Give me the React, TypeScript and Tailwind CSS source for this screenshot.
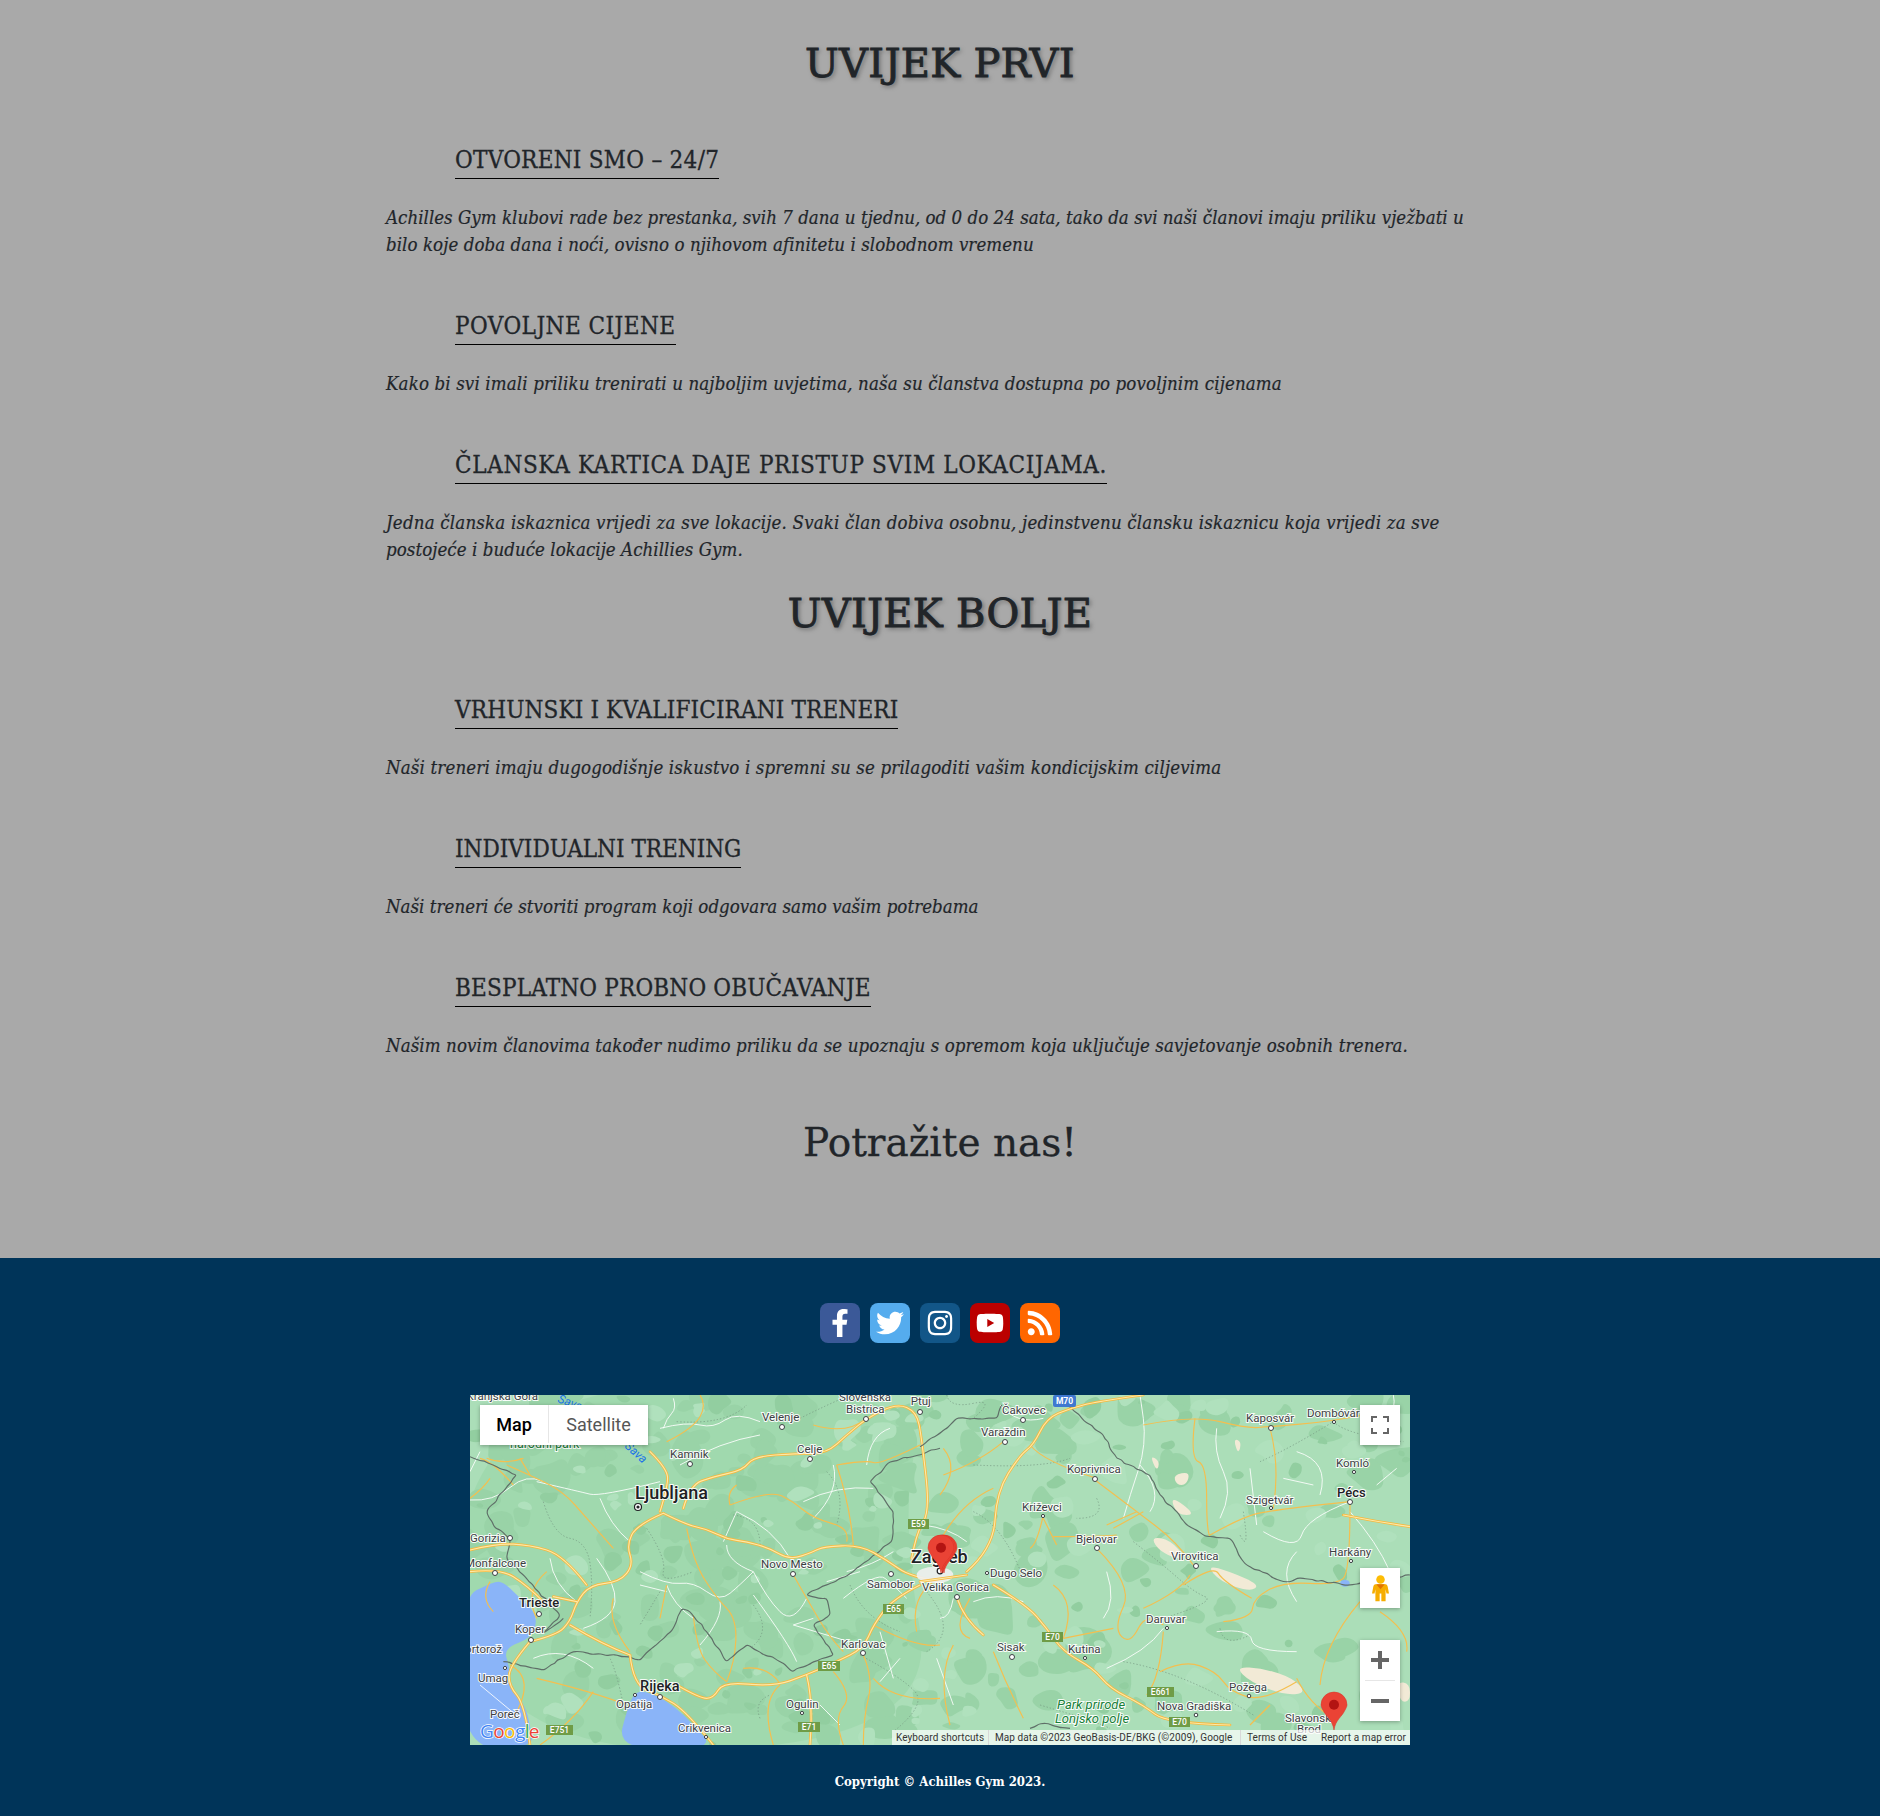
import React from "react";
import { FaFacebookF, FaTwitter, FaInstagram, FaYoutube, FaRss } from "react-icons/fa";

const smooth = (pts: number[][], close = false) => {
  if (pts.length < 3) return "M" + pts.map((p) => p.join(" ")).join("L");
  let d = "";
  if (close) {
    const s = [(pts[0][0] + pts[pts.length - 1][0]) / 2, (pts[0][1] + pts[pts.length - 1][1]) / 2];
    d = `M${s[0]} ${s[1]}`;
    pts.forEach((p, i) => {
      const n = pts[(i + 1) % pts.length];
      d += `Q${p[0]} ${p[1]} ${(p[0] + n[0]) / 2} ${(p[1] + n[1]) / 2}`;
    });
    return d + "Z";
  }
  d = `M${pts[0][0]} ${pts[0][1]}`;
  for (let i = 1; i < pts.length - 1; i++) {
    const p = pts[i];
    const n = pts[i + 1];
    const last = i === pts.length - 2;
    d += `Q${p[0]} ${p[1]} ${last ? n[0] : (p[0] + n[0]) / 2} ${last ? n[1] : (p[1] + n[1]) / 2}`;
  }
  return d;
};

const rng = (seed: number) => () => {
  seed = (seed + 0x6d2b79f5) | 0;
  let t = Math.imul(seed ^ (seed >>> 15), 1 | seed);
  t = (t + Math.imul(t ^ (t >>> 7), 61 | t)) ^ t;
  return ((t ^ (t >>> 14)) >>> 0) / 4294967296;
};
const patches = (seed: number, n: number, x0: number, x1: number, rMin: number, rMax: number) => {
  const r = rng(seed);
  const out: number[][][] = [];
  for (let i = 0; i < n; i++) {
    const cx = x0 + r() * (x1 - x0);
    const cy = r() * 350;
    const base = rMin + r() * (rMax - rMin);
    const pts: number[][] = [];
    const k = 6 + Math.floor(r() * 3);
    const sq = 0.55 + r() * 0.6;
    for (let j = 0; j < k; j++) {
      const a = (j / k) * Math.PI * 2;
      const rad = base * (0.55 + r() * 0.75);
      pts.push([+(cx + Math.cos(a) * rad).toFixed(1), +(cy + Math.sin(a) * rad * sq).toFixed(1)]);
    }
    out.push(pts);
  }
  return out;
};
// A national border wiggles: subdivide each leg and displace it.
const jag = (lines: number[][][], seed: number) => {
  const r = rng(seed);
  return lines.map((pts) => {
    const out: number[][] = [pts[0]];
    for (let i = 1; i < pts.length; i++) {
      const [ax, ay] = pts[i - 1];
      const [bx, by] = pts[i];
      const steps = Math.max(1, Math.round(Math.hypot(bx - ax, by - ay) / 14));
      for (let s = 1; s <= steps; s++) {
        const t = s / steps;
        const j = s === steps ? 0 : 7;
        out.push([+(ax + (bx - ax) * t + (r() - 0.5) * j).toFixed(1), +(ay + (by - ay) * t + (r() - 0.5) * j).toFixed(1)]);
      }
    }
    return out;
  });
};
const darkPatches = [...patches(11, 150, 0, 470, 7, 22), ...patches(23, 80, 470, 940, 7, 24)];
const deepPatches = [...patches(37, 60, 0, 470, 4, 12), ...patches(41, 30, 470, 940, 4, 11)];
const lightPatches = [...patches(53, 50, 0, 480, 5, 14), ...patches(59, 40, 470, 940, 6, 16)];

const tanE: number[][][] = [
  [[665,455],[720,465],[770,520],[730,520],[680,490]],
  [[830,540],[900,560],[990,600],[960,620],[870,590]],
  [[915,845],[1000,850],[1090,880],[1130,925],[1060,930],[960,890]],
  [[730,270],[780,260],[770,300],[740,300]],
  [[660,210],[690,230],[680,260]],
  [[910,160],[935,170],[925,210]],
  [[720,330],[800,390],[740,390]],
  [[1400,890],[1440,895],[1440,950],[1410,950]],
];
const motorW: number[][][] = [
  [[610,385],[680,420],[740,432],[800,462],[860,470],[930,490],[990,525],[1060,500],[1090,485],[1200,480],[1280,525],[1350,575],[1440,590]],
  [[610,385],[530,420],[500,480],[520,540],[480,590],[390,600],[350,650],[330,710],[290,750],[210,770]],
  [[280,635],[350,650]],
  [[670,370],[690,300],[760,275],[850,255],[880,215],[1010,205],[1100,205],[1160,150],[1220,100],[1310,55],[1370,80],[1385,160],[1410,380],[1370,440],[1355,520]],
  [[600,380],[625,300],[620,250],[570,200]],
  [[510,810],[520,900],[600,930],[680,980],[760,1080]],
  [[650,900],[720,940],[760,940],[790,890],[940,905],[1040,870],[1130,830],[1210,790],[1240,720],[1300,640],[1380,600]],
  [[1040,870],[1060,950],[1050,1080]],
  [[330,720],[430,780],[510,810]],
  [[210,770],[150,840],[145,900],[195,960],[210,1080]],
  [[30,495],[110,475],[210,480],[310,510],[380,600]],
  [[30,560],[120,550],[200,600],[250,650]],
];
const orangeW: number[][][] = [
  [[140,240],[210,270],[310,320],[380,400],[460,490]],
  [[210,270],[180,220]],
  [[680,430],[700,530],[770,640],[830,700],[825,830],[800,890]],
  [[1000,570],[1040,640],[1110,760],[1150,800]],
  [[620,600],[600,700]],
  [[810,360],[930,315],[1000,350],[1060,400],[1170,430],[1160,470]],
  [[1130,240],[1170,360],[1180,480]],
  [[1130,240],[1220,225],[1260,240],[1380,180]],
  [[1210,810],[1240,880],[1210,1000],[1210,1080]],
  [[1240,720],[1370,790],[1440,780]],
  [[850,850],[920,840],[960,895]],
  [[700,690],[710,790],[760,860],[800,890]],
  [[150,840],[230,880],[160,1000]],
  [[230,880],[400,920],[500,960]],
  [[400,920],[340,1010],[240,1080]],
  [[810,360],[800,320],[830,300]],
  [[460,640],[440,710],[510,800]],
  [[940,1080],[900,950],[960,900]],
  [[1240,880],[1300,950],[1440,940]],
  [[620,170],[700,130],[740,60],[720,30]],
  [[60,220],[100,230],[160,300]],
  [[1060,120],[1160,150],[1220,100]],
  [[1420,590],[1350,640],[1370,740]],
  [[80,220],[130,240],[190,220]],
  [[30,340],[70,310],[90,280]],
  [[100,680],[60,640],[90,590]],
  [[230,700],[190,620],[260,560]],
  [[1120,860],[1180,930],[1120,1000],[1150,1080]],
];
const whiteW: number[][][] = [
  [[420,340],[450,420],[510,470]],
  [[540,560],[620,600],[700,590],[780,650],[840,600],[880,560]],
  [[620,600],[640,660],[700,700]],
  [[880,560],[920,640],[1000,720],[1040,640]],
  [[800,480],[800,530],[880,560]],
  [[830,380],[790,470]],
  [[830,380],[940,430],[990,520]],
  [[1030,350],[1130,300],[1240,310]],
  [[30,345],[100,350],[200,265],[250,290]],
  [[230,290],[360,320],[420,335],[600,290]],
  [[600,130],[680,110],[760,130],[830,80],[900,110]],
  [[640,40],[650,70],[620,100],[610,130]],
  [[1160,560],[1240,540],[1300,500]],
  [[880,630],[990,780],[1010,830]],
  [[1000,720],[1200,780]],
  [[1060,700],[1000,720]],
  [[1260,740],[1300,880]],
  [[660,240],[780,170],[900,150]],
  [[270,520],[280,600],[350,650]],
  [[540,600],[620,620]],
  [[1100,590],[1200,560]],
  [[180,1000],[60,900]],
  [[780,650],[790,700],[720,780]],
  [[1150,640],[1250,560],[1300,600],[1340,640]],
  [[1220,240],[1230,150],[1290,130]],
  [[1120,240],[1140,320],[1060,400]],
  [[60,200],[30,260]],
  [[220,820],[310,780],[400,850]],
  [[1080,960],[1140,1020]],
  [[1320,820],[1260,890]],
  [[410,520],[470,600],[460,700],[370,730]],
];
const dotW: number[][][] = [
  [[250,350],[280,450],[380,470],[400,600],[390,700]],
  [[560,430],[620,520],[600,600],[700,560]],
  [[820,390],[900,400],[900,480]],
  [[650,110],[800,120],[860,60]],
  [[1020,100],[1100,60],[1170,30]],
  [[1200,810],[1330,880],[1400,960],[1300,1040]],
  [[880,660],[940,740],[870,790]],
  [[1100,260],[1160,320],[1130,420]],
  [[490,960],[470,860],[450,820]],
  [[900,1000],[880,950],[930,930]],
  [[1170,600],[1210,700],[1320,740]],
  [[600,620],[540,720]],
];
const borderW = jag([
  [[130,830],[250,855],[340,800],[500,815],[540,825],[640,730],[665,672],[690,680],[740,740],[800,830],[860,780],[950,825],[1000,860],[1060,830],[1120,810],[1060,720],[1110,690],[1100,640],[1040,630],[1100,600],[1180,560],[1295,470],[1300,380],[1230,290],[1290,230],[1440,190]],
  [[150,460],[100,420],[80,380],[170,270],[100,240],[30,215]],
  [[150,460],[140,520],[200,580],[300,690],[250,745],[310,700]],
], 71);
const motorE: number[][][] = [
  [[110,560],[190,490],[200,320],[270,210],[310,180],[350,100],[420,70],[500,50],[640,30]],
  [[190,600],[290,660],[350,730],[400,800],[490,850],[540,910],[640,960],[710,1015],[900,1020]],
  [[80,635],[100,700],[160,750]],
  [[1240,390],[1340,410],[1440,425]],
  [[-30,590],[110,570]],
];
const orangeE: number[][][] = [
  [[340,390],[320,480],[300,490]],
  [[340,400],[380,480]],
  [[370,455],[500,455],[560,450]],
  [[500,490],[610,600],[550,730],[600,780],[650,680],[700,720]],
  [[550,730],[400,760]],
  [[495,285],[620,380],[740,470],[790,540]],
  [[530,420],[620,380]],
  [[780,570],[750,620],[640,670]],
  [[795,100],[780,220],[830,240],[830,440],[840,455]],
  [[640,120],[790,90],[950,130],[1020,125],[1200,110],[1300,90]],
  [[1020,130],[1050,240],[1030,370]],
  [[840,450],[930,400],[1020,375],[1260,350]],
  [[1260,360],[1260,560],[1220,600],[1060,590],[970,640],[965,700],[880,710]],
  [[700,740],[690,880],[650,930]],
  [[690,860],[760,825],[860,860],[900,920],[1000,950],[1100,890]],
  [[1100,880],[1140,960],[1210,1000]],
  [[1020,960],[960,1020]],
  [[220,170],[150,230],[40,270]],
  [[190,310],[100,350],[40,450]],
  [[70,780],[20,870],[60,1020]],
  [[190,800],[230,900],[280,1000]],
  [[1290,650],[1180,780],[1170,900]],
  [[1350,680],[1440,740],[1430,800]],
  [[965,640],[880,590],[850,540],[760,600]],
  [[550,430],[640,380]],
  [[40,190],[90,250],[30,330]],
  [[300,180],[340,230],[500,280]],
  [[120,640],[60,740],[120,760]],
  [[370,600],[440,650],[400,760]],
];
const whiteE: number[][][] = [
  [[70,640],[60,700],[30,700]],
  [[640,100],[650,180],[600,330],[580,400]],
  [[630,30],[640,100]],
  [[530,560],[560,650],[520,700]],
  [[110,470],[60,430],[-20,420]],
  [[860,130],[850,200],[910,320],[870,400]],
  [[980,420],[960,250]],
  [[1000,440],[1100,500],[1130,400],[1260,350]],
  [[1260,380],[1340,470],[1380,560]],
  [[1340,300],[1400,250]],
  [[860,740],[960,730],[970,800],[1100,800]],
  [[530,850],[650,800],[700,730]],
  [[1100,200],[1200,230],[1170,330]],
  [[210,60],[260,120],[340,100]],
  [[1100,650],[1040,560],[1100,500]],
  [[1370,150],[1400,60],[1390,30]],
  [[20,820],[70,960]],
  [[630,240],[700,320],[660,380]],
  [[130,650],[200,620],[280,650]],
  [[1150,300],[1060,280]],
];
const dotE: number[][][] = [
  [[50,30],[60,70],[200,40],[130,100]],
  [[-10,620],[90,740],[-10,800]],
  [[130,240],[340,250],[420,220]],
  [[130,380],[220,420],[280,580]],
  [[500,340],[530,400],[440,400]],
  [[610,470],[700,540],[790,620],[860,650],[700,700]],
  [[990,230],[1080,190],[1210,110]],
  [[1210,110],[1250,150],[1420,170]],
  [[940,380],[960,510],[930,450]],
  [[870,730],[880,790],[960,750]],
  [[580,830],[760,860],[970,990]],
  [[330,960],[500,1010],[540,1030]],
];
const borderE = jag([
  [[410,60],[520,150],[560,220],[660,270],[690,330],[735,375],[770,420],[830,455],[900,460],[950,540],[1060,590],[1120,580],[1260,600],[1440,570]],
  [[-30,185],[50,130],[80,100],[130,100],[200,100],[215,60]],
  [[300,1030],[340,1015],[420,1030]],
], 83);

const halo = "[paint-order:stroke] stroke-white/90 stroke-[2px]";
const labels: [string, number, number][] = [
  ["Kamnik", 200, 63.3],
  ["Velenje", 292, 26],
  ["Celje", 327, 57.7],
  ["Slovenska", 369, 5.7],
  ["Bistrica", 376, 18],
  ["Ptuj", 440.7, 10],
  ["Gorizia", 0, 146.7],
  ["Umag", 8, 287],
  ["Poreč", 20, 323],
  ["Koper", 45, 238],
  ["Opatija", 146, 313],
  ["Crikvenica", 208, 337],
  ["Ogulin", 316, 313],
  ["Karlovac", 371, 253],
  ["Novo Mesto", 291, 173],
  ["Samobor", 397, 193],
  ["Velika Gorica", 452, 196],
  ["Čakovec", 532, 19],
  ["Varaždin", 511, 41],
  ["Koprivnica", 597, 78],
  ["Križevci", 552, 116],
  ["Bjelovar", 606, 148],
  ["Dugo Selo", 520, 182],
  ["Sisak", 527, 256],
  ["Kutina", 598, 258],
  ["Daruvar", 676, 228],
  ["Virovitica", 701, 165],
  ["Kaposvár", 776, 27],
  ["Dombóvár", 837, 22],
  ["Komló", 866, 72],
  ["Szigetvár", 776, 109],
  ["Harkány", 859, 161],
  ["Požega", 759, 296],
  ["Nova Gradiška", 687, 315],
  ["Slavonski", 815, 327],
  ["Brod", 827, 338],
];
const bigLabels: [string, number, number, number][] = [
  ["Ljubljana", 165, 104, 18],
  ["Zagreb", 441, 168, 18],
  ["Rijeka", 170, 296, 14.5],
  ["Trieste", 49, 212, 13],
  ["Pécs", 867, 102, 13],
];
const cityDots: [number, number, number][] = [
  [190, 302, 2.5], [69, 219, 2.5], [61, 245, 2.5], [323, 179, 2.5], [421, 179, 2.5], [393, 258, 2.5],
  [40, 143, 2.5], [25, 178, 2.5], [312, 32, 2.5], [340, 64, 2.5], [396, 24, 2.5], [450, 17, 2.5], [220, 69, 2.5],
  [553, 25, 2.5], [535, 47, 2.5], [625, 84, 2.5], [627, 153, 2.5], [487, 202, 2.5], [542, 262, 2.5], [726, 171, 2.5],
  [801, 33, 2.5], [880, 107, 2.5], [779, 301, 1.8], [726, 320, 1.8], [573, 121, 1.6], [517, 178, 1.6], [615, 263, 1.6],
  [697, 233, 1.6], [864, 27, 1.6], [884, 77, 1.6], [801, 113, 1.6], [881, 166, 1.6], [35, 273, 1.6], [165, 300, 1.6], [332, 318, 1.6], [236, 342, 1.6],
];
const shields: [string, number, number, number][] = [
  ["E59", 438, 124, 21],
  ["E65", 413, 209, 21],
  ["E65", 348, 266, 22],
  ["E71", 328, 327, 22],
  ["E751", 76, 330, 27],
  ["E70", 572, 237, 21],
  ["E661", 677, 292, 27],
  ["E70", 699, 322, 21],
];

const Lines = ({ data, cls }: { data: number[][][]; cls: string }) => (
  <g className={cls}>
    {data.map((d, i) => (
      <path key={i} d={smooth(d)} />
    ))}
  </g>
);
const Blobs = ({ data, cls }: { data: number[][][]; cls: string }) => (
  <g className={cls}>
    {data.map((d, i) => (
      <path key={i} d={smooth(d, true)} />
    ))}
  </g>
);

const Pin = ({ x, y }: { x: number; y: number }) => (
  <g transform={`translate(${x - 13},${y - 38})`}>
    <path d="M13 38 C11.5 28 5 24.5 2.5 19 C.8 16 0 14.5 0 12.8 A13 12.8 0 0 1 26 12.8 C26 14.5 25.2 16 23.5 19 C21 24.5 14.5 28 13 38Z" fill="#ea4335" stroke="#d93025" strokeWidth="0.5" />
    <circle cx="13" cy="12.8" r="5" fill="#b31412" />
  </g>
);

const MapArt = () => (
  <svg viewBox="0 0 940 350" className="absolute inset-0 h-full w-full">
    <rect width="940" height="350" fill="#abdeb8" />
    <path d={smooth([[-10,-10],[460,-10],[430,120],[470,350],[-10,360]], true)} fill="#a0d9ae" />
    <Blobs data={darkPatches} cls="fill-[#99d3a7]" />
    <Blobs data={deepPatches} cls="fill-[#92cea0]" />
    <Blobs data={lightPatches} cls="fill-[#b0e1bd]" />
    <g transform="translate(-10 -10) scale(0.33333)" fill="none">
      <path d={smooth([[0,640],[100,590],[130,590],[170,630],[235,690],[215,760],[130,790],[150,850],[145,900],[195,960],[210,1020],[222,1090],[0,1090]], true)} fill="#8ab4f8" />
      <path d={smooth([[470,1095],[505,960],[530,915],[590,930],[650,970],[690,1010],[770,1095]], true)} fill="#8ab4f8" />
      <Lines data={dotW} cls="fill-none stroke-[#6f8f7c] [stroke-width:2] [stroke-dasharray:4_6]" />
      <Lines data={whiteW} cls="fill-none stroke-white/85 [stroke-width:3]" />
      <Lines data={orangeW} cls="fill-none stroke-[#f4bf4f] [stroke-width:3.5]" />
      <Lines data={borderW} cls="fill-none stroke-[#5f6f68] [stroke-width:3.5]" />
      <Lines data={motorW} cls="fill-none stroke-[#f5b83d] [stroke-width:8] [stroke-linecap:round]" />
      <Lines data={motorW} cls="fill-none stroke-[#fde9a8] [stroke-width:3.5] [stroke-linecap:round]" />
    </g>
    <g transform="translate(460 -10) scale(0.33333)" fill="none">
      <Blobs data={tanE} cls="fill-[#f2ead6]" />
      <ellipse cx="15" cy="570" rx="55" ry="25" fill="#efefef" opacity="0.9" />
      <ellipse cx="1245" cy="595" rx="14" ry="10" fill="#8ab4f8" />
      <Lines data={dotE} cls="fill-none stroke-[#6f8f7c] [stroke-width:2] [stroke-dasharray:4_6]" />
      <Lines data={whiteE} cls="fill-none stroke-white/85 [stroke-width:3]" />
      <Lines data={orangeE} cls="fill-none stroke-[#f4bf4f] [stroke-width:3.5]" />
      <Lines data={borderE} cls="fill-none stroke-[#5f6f68] [stroke-width:3.5]" />
      <Lines data={motorE} cls="fill-none stroke-[#f5b83d] [stroke-width:8] [stroke-linecap:round]" />
      <Lines data={motorE} cls="fill-none stroke-[#fde9a8] [stroke-width:3.5] [stroke-linecap:round]" />
    </g>
    {cityDots.map(([x, y, r], i) => (
      <circle key={i} cx={x} cy={y} r={r} fill="#fff" stroke="#3c4043" strokeWidth="1" />
    ))}
    <circle cx="168" cy="112" r="3.5" fill="#fff" stroke="#202124" strokeWidth="1.2" />
    <circle cx="168" cy="112" r="1.6" fill="#202124" />
    <circle cx="470" cy="176" r="2.8" fill="#fff" stroke="#202124" strokeWidth="1.2" />
    <g className="[font-family:Roboto,sans-serif]">
      <text x="68" y="5" textAnchor="end" fontSize="11.5" fill="#3c4043" className={halo}>Kranjska Gora</text>
      <text x="56" y="172" textAnchor="end" fontSize="11.5" fill="#3c4043" className={halo}>Monfalcone</text>
      <text x="32" y="258" textAnchor="end" fontSize="11.5" fill="#3c4043" className={halo}>Portorož</text>
      {labels.map(([t, x, y]) => (
        <text key={t + x} x={x} y={y} fontSize="11.5" fill="#3c4043" className={halo}>{t}</text>
      ))}
      {bigLabels.map(([t, x, y, s]) => (
        <text key={t} x={x} y={y} fontSize={s} fontWeight="500" fill="#202124" className={halo}>{t}</text>
      ))}
      <text x="587" y="314" fontSize="13" fontStyle="italic" fill="#188038" className={halo}>Park prirode</text>
      <text x="585" y="328" fontSize="13" fontStyle="italic" fill="#188038" className={halo}>Lonjsko polje</text>
      <text x="40" y="53" fontSize="12.5" fill="#188038" className={halo}>narodni park</text>
      <text x="87" y="7" fontSize="12" fontStyle="italic" fill="#1a73e8" transform="rotate(20 87 7)">Sava</text>
      <text x="154" y="52" fontSize="12" fontStyle="italic" fill="#1a73e8" transform="rotate(42 154 52)">Sava</text>
      {shields.map(([t, x, y, w]) => (
        <g key={t + x}>
          <rect x={x} y={y} width={w} height="10" fill="#6f9c46" />
          <text x={x + w / 2} y={y + 8} fontSize="8.5" fontWeight="500" fill="#fff" textAnchor="middle">{t}</text>
        </g>
      ))}
      <rect x="583" y="0" width="23" height="12" rx="2" fill="#3f78d0" />
      <text x="594.5" y="9" fontSize="8.5" fontWeight="700" fill="#fff" textAnchor="middle">M70</text>
    </g>
    <Pin x={474} y={178} />
    <Pin x={472.5} y={178} />
    <Pin x={471} y={178} />
    <Pin x={864} y={335} />
    <text x="10" y="343" fontSize="19" className="[font-family:'Open_Sans',sans-serif] [paint-order:stroke] stroke-white stroke-[1.5px]" letterSpacing="-0.6">
      <tspan fill="#4285f4">G</tspan>
      <tspan fill="#ea4335">o</tspan>
      <tspan fill="#fbbc05">o</tspan>
      <tspan fill="#4285f4">g</tspan>
      <tspan fill="#34a853">l</tspan>
      <tspan fill="#ea4335">e</tspan>
    </text>
  </svg>
);

const Pegman = () => (
  <svg viewBox="0 0 20 32" className="h-[29px] w-[17px]">
    <circle cx="10" cy="5.5" r="5" fill="#fdbc05" />
    <path d="M4 11 H16 C17.5 11 18 12 18.5 14 L20 22 H17 L16 17 V31 H11 V22 H9 V31 H4 V17 L3 22 H0 L1.5 14 C2 12 2.5 11 4 11Z" fill="#f6ad01" />
    <path d="M5 11 L10 17 L15 11Z" fill="#e37400" />
  </svg>
);

const GoogleMap = () => (
  <div className="relative mx-auto h-[350px] w-[940px] overflow-hidden [font-family:Roboto,sans-serif]">
    <MapArt />
    <div className="absolute left-[10px] top-[10px] flex h-[40px] w-[168px] bg-white pb-[2px] text-[18px] shadow-[0_1px_4px_rgba(0,0,0,0.3)]">
      <div className="flex w-[69px] items-center justify-center border-r border-[#e6e6e6] font-medium text-black">Map</div>
      <div className="flex flex-1 items-center justify-center text-[#565656]">Satellite</div>
    </div>
    <div className="absolute right-[10px] top-[10px] flex h-[40px] w-[40px] items-center justify-center bg-white shadow-[0_1px_4px_rgba(0,0,0,0.3)]">
      <svg viewBox="0 0 18 18" className="h-[18px] w-[18px]" fill="#666">
        <path d="M0 0H6V2H2V6H0ZM12 0H18V6H16V2H12ZM0 12H2V16H6V18H0ZM16 12H18V18H12V16H16Z" />
      </svg>
    </div>
    <div className="absolute right-[10px] top-[173px] flex h-[40px] w-[40px] items-center justify-center bg-white shadow-[0_1px_4px_rgba(0,0,0,0.3)]">
      <Pegman />
    </div>
    <div className="absolute right-[10px] top-[245px] flex h-[81px] w-[40px] flex-col items-center bg-white shadow-[0_1px_4px_rgba(0,0,0,0.3)]">
      <div className="flex h-[40px] items-center justify-center">
        <svg viewBox="0 0 18 18" className="h-[18px] w-[18px]" fill="#666"><path d="M7 0H11V7H18V11H11V18H7V11H0V7H7Z" /></svg>
      </div>
      <div className="h-px w-[30px] bg-[#e6e6e6]" />
      <div className="flex h-[40px] items-center justify-center">
        <svg viewBox="0 0 18 18" className="h-[18px] w-[18px]" fill="#666"><path d="M0 7H18V11H0Z" /></svg>
      </div>
    </div>
    <div className="absolute bottom-0 right-0 flex h-[15px] w-[518px] items-center bg-white/70 text-[10px] leading-[15px] tracking-[0.08px] text-[#333]">
      <span className="ml-[4px] w-[92px] whitespace-nowrap">Keyboard shortcuts</span>
      <span className="w-[252px] whitespace-nowrap border-l border-[#d8d8d8] pl-[6px]">Map data ©2023 GeoBasis-DE/BKG (©2009), Google</span>
      <span className="w-[81px] whitespace-nowrap border-l border-[#d8d8d8] pl-[6px]">Terms of Use</span>
      <span className="whitespace-nowrap">Report a map error</span>
    </div>
  </div>
);

const cond = "[font-family:'DejaVu_Serif_Condensed','DejaVu_Serif',serif]";
const wide = "[font-family:'DejaVu_Serif',serif] [font-stretch:100%]";

type Line = [string, string];
const Item = ({ title, lines, first, track }: { title: string; lines: Line[]; first?: boolean; track: string }) => (
  <div className={first ? "mt-[59px]" : "mt-[54px]"}>
    <div className="pl-[70px]">
      <h3 className={`inline-block border-b border-black pb-[3px] text-[24px] leading-[29px] text-[#212529] [-webkit-text-stroke:0.3px_#212529] ${track}`}>{title}</h3>
    </div>
    <div className="mt-[25px] pl-[1px] text-[18.5px] italic leading-[27px] text-[#212529] [-webkit-text-stroke:0.2px_#212529]">
      {lines.map(([text, t]) => (
        <p key={text} className={`whitespace-nowrap ${t}`}>{text}</p>
      ))}
    </div>
  </div>
);

const H1 = ({ children }: { children: string }) => (
  <h1 className={`text-center text-[40px] font-normal leading-[48px] tracking-[0.3px] text-[#212529] [-webkit-text-stroke:0.9px_#212529] [text-shadow:2px_2px_4px_#6b6b6b] ${wide}`}>{children}</h1>
);

const socials = [
  { bg: "bg-[#3b5998]", Icon: FaFacebookF },
  { bg: "bg-[#55acee]", Icon: FaTwitter },
  { bg: "bg-[#125688]", Icon: FaInstagram },
  { bg: "bg-[#bb0000]", Icon: FaYoutube },
  { bg: "bg-[#ff6600]", Icon: FaRss },
];

export default function App() {
  return (
    <div className={`min-h-[1816px] bg-[#a9a9a9] ${cond}`}>
      <main className="mx-auto h-[1258px] w-[1140px] px-[15px] pt-[39px]">
        <H1>UVIJEK PRVI</H1>
        <Item first track="tracking-[0.28px]" title="OTVORENI SMO – 24/7" lines={[["Achilles Gym klubovi rade bez prestanka, svih 7 dana u tjednu, od 0 do 24 sata, tako da svi naši članovi imaju priliku vježbati u", "tracking-[0.035px]"], ["bilo koje doba dana i noći, ovisno o njihovom afinitetu i slobodnom vremenu", "tracking-[0.074px]"]]} />
        <Item track="tracking-[0.48px]" title="POVOLJNE CIJENE" lines={[["Kako bi svi imali priliku trenirati u najboljim uvjetima, naša su članstva dostupna po povoljnim cijenama", "tracking-[0.147px]"]]} />
        <Item track="tracking-[0.64px]" title="ČLANSKA KARTICA DAJE PRISTUP SVIM LOKACIJAMA." lines={[["Jedna članska iskaznica vrijedi za sve lokacije. Svaki član dobiva osobnu, jedinstvenu člansku iskaznicu koja vrijedi za sve", "tracking-[0.196px]"], ["postojeće i buduće lokacije Achillies Gym.", "tracking-[0.06px]"]]} />
        <div className="mt-[26px]">
          <H1>UVIJEK BOLJE</H1>
        </div>
        <Item first track="tracking-[0.15px]" title="VRHUNSKI I KVALIFICIRANI TRENERI" lines={[["Naši treneri imaju dugogodišnje iskustvo i spremni su se prilagoditi vašim kondicijskim ciljevima", "tracking-[0.163px]"]]} />
        <Item track="tracking-[0px]" title="INDIVIDUALNI TRENING" lines={[["Naši treneri će stvoriti program koji odgovara samo vašim potrebama", "tracking-[0.036px]"]]} />
        <Item track="tracking-[0.18px]" title="BESPLATNO PROBNO OBUČAVANJE" lines={[["Našim novim članovima također nudimo priliku da se upoznaju s opremom koja uključuje savjetovanje osobnih trenera.", "tracking-[0.11px]"]]} />
        <h2 className={`mt-[60px] text-center text-[39px] font-normal leading-[48px] text-[#212529] [-webkit-text-stroke:0.3px_#212529] ${wide}`}>Potražite nas!</h2>
      </main>
      <footer className="h-[558px] bg-[#003459] pt-[45px]">
        <div className="flex justify-center gap-[10px]">
          {socials.map(({ bg, Icon }, i) => (
            <a key={i} className={`flex h-[40px] w-[40px] items-center justify-center rounded-[8px] text-[28px] text-white ${bg}`}>
              <Icon />
            </a>
          ))}
        </div>
        <div className="mt-[52px]">
          <GoogleMap />
        </div>
        <p className="mt-[26px] text-center text-[13px] font-bold leading-[21px] text-white">Copyright © Achilles Gym 2023.</p>
      </footer>
    </div>
  );
}
